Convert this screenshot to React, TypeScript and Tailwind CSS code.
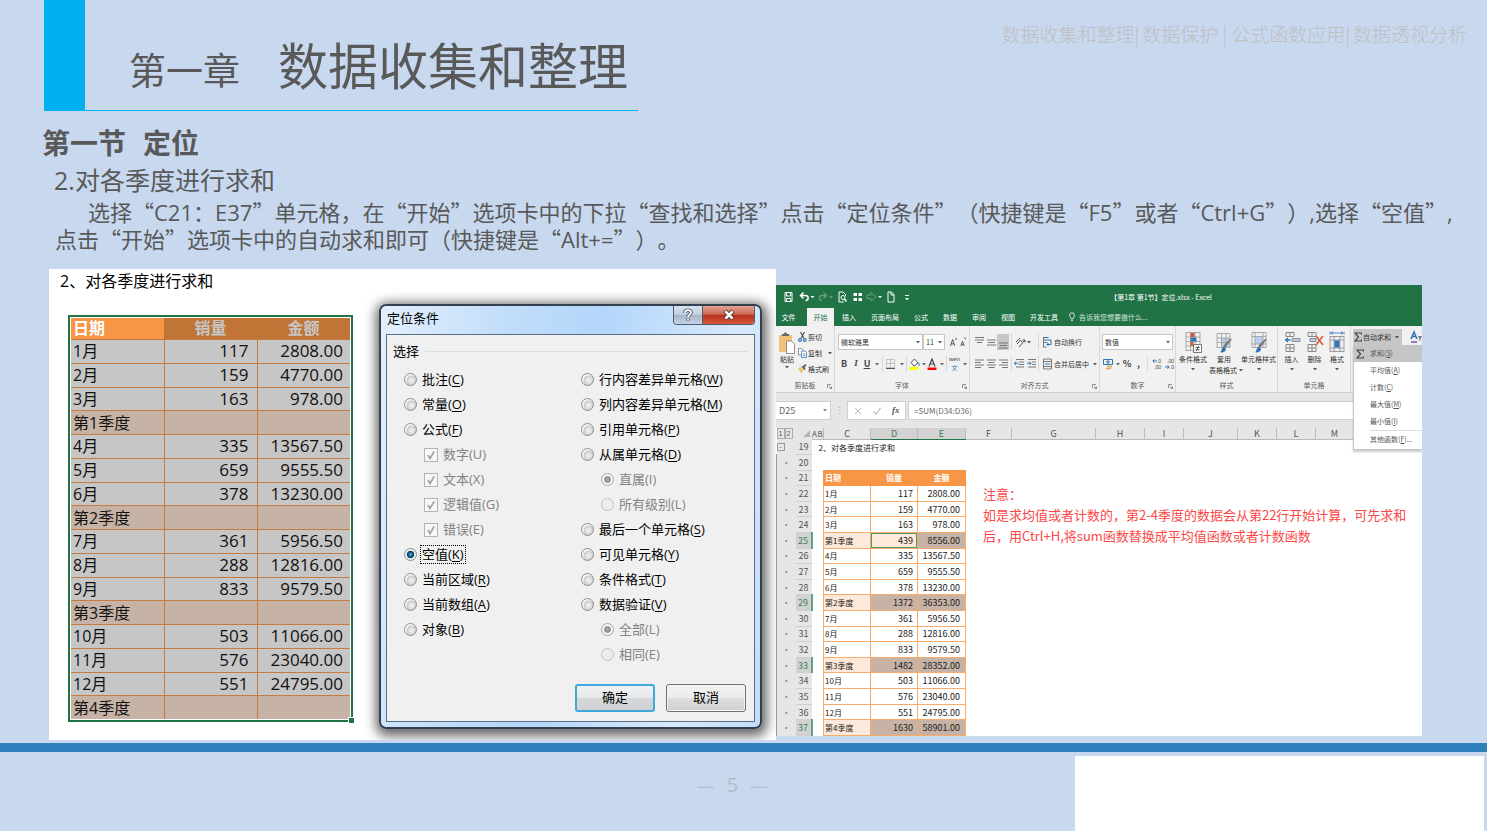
import React from "react";

/* ---------- data ---------- */

type Row = { label: string; qty?: string; amount?: string; total?: [string, string] };

const rows: Row[] = [
  { label: "1月", qty: "117", amount: "2808.00" },
  { label: "2月", qty: "159", amount: "4770.00" },
  { label: "3月", qty: "163", amount: "978.00" },
  { label: "第1季度", total: ["439", "8556.00"] },
  { label: "4月", qty: "335", amount: "13567.50" },
  { label: "5月", qty: "659", amount: "9555.50" },
  { label: "6月", qty: "378", amount: "13230.00" },
  { label: "第2季度", total: ["1372", "36353.00"] },
  { label: "7月", qty: "361", amount: "5956.50" },
  { label: "8月", qty: "288", amount: "12816.00" },
  { label: "9月", qty: "833", amount: "9579.50" },
  { label: "第3季度", total: ["1482", "28352.00"] },
  { label: "10月", qty: "503", amount: "11066.00" },
  { label: "11月", qty: "576", amount: "23040.00" },
  { label: "12月", qty: "551", amount: "24795.00" },
  { label: "第4季度", total: ["1630", "58901.00"] },
];

type Option = {
  text: string;
  keyChar: string;
  kind: "radio" | "check";
  group?: string;
  sub?: boolean;
  checked?: boolean;
};

const leftOptions: Option[] = [
  { text: "批注", keyChar: "C", kind: "radio" },
  { text: "常量", keyChar: "O", kind: "radio" },
  { text: "公式", keyChar: "F", kind: "radio" },
  { text: "数字", keyChar: "U", kind: "check", sub: true, checked: true },
  { text: "文本", keyChar: "X", kind: "check", sub: true, checked: true },
  { text: "逻辑值", keyChar: "G", kind: "check", sub: true, checked: true },
  { text: "错误", keyChar: "E", kind: "check", sub: true, checked: true },
  { text: "空值", keyChar: "K", kind: "radio", checked: true },
  { text: "当前区域", keyChar: "R", kind: "radio" },
  { text: "当前数组", keyChar: "A", kind: "radio" },
  { text: "对象", keyChar: "B", kind: "radio" },
];

const rightOptions: Option[] = [
  { text: "行内容差异单元格", keyChar: "W", kind: "radio" },
  { text: "列内容差异单元格", keyChar: "M", kind: "radio" },
  { text: "引用单元格", keyChar: "P", kind: "radio" },
  { text: "从属单元格", keyChar: "D", kind: "radio" },
  { text: "直属", keyChar: "I", kind: "radio", sub: true, group: "dependents", checked: true },
  { text: "所有级别", keyChar: "L", kind: "radio", sub: true, group: "dependents" },
  { text: "最后一个单元格", keyChar: "S", kind: "radio" },
  { text: "可见单元格", keyChar: "Y", kind: "radio" },
  { text: "条件格式", keyChar: "T", kind: "radio" },
  { text: "数据验证", keyChar: "V", kind: "radio" },
  { text: "全部", keyChar: "L", kind: "radio", sub: true, group: "validation", checked: true },
  { text: "相同", keyChar: "E", kind: "radio", sub: true, group: "validation" },
];

/* ---------- slide header ---------- */

function Header() {
  const topics = ["数据收集和整理", "数据保护", "公式函数应用", "数据透视分析"];
  return (
    <header className="flex items-start justify-between pl-11 pr-5">
      <div className="flex h-[111px] w-[594px] border-b border-[#00b0f0]">
        <div className="w-[41px] bg-[#00b0f0]" />
        <h1 className="flex items-baseline gap-[38px] whitespace-nowrap pl-11 pt-[31px] font-normal text-[#595959]">
          <span className="text-[37px] leading-[64px]">第一章</span>
          <span className="text-[50px] leading-[64px]">数据收集和整理</span>
        </h1>
      </div>
      <nav className="flex whitespace-nowrap pt-5 text-[19px] font-light leading-7 text-[#bfbfbf]">
        {topics.map((t, i) => (
          <React.Fragment key={t}>
            {i > 0 && <span className={i === 2 ? "px-1" : "pr-[3px]"}>|</span>}
            <a href="#">{t}</a>
          </React.Fragment>
        ))}
      </nav>
    </header>
  );
}

function En({ children }: { children: React.ReactNode }) {
  return <span className="font-['Open_Sans'] leading-none">{children}</span>;
}

function Intro() {
  return (
    <section className="pl-[42px] text-[#595959]">
      <h2 className="mt-[15px] flex gap-[17px] text-[28px] font-bold leading-8">
        <span>第一节</span>
        <span>定位</span>
      </h2>
      <h3 className="mt-1.5 h-8 pl-3 text-[25px] font-normal leading-[31px]">
        <En>2.</En>对各季度进行求和
      </h3>
      <p className="mt-0.5 whitespace-nowrap pl-[13px] text-[22px] leading-[27px] [text-spacing-trim:space-all]">
        <span className="pl-[33px]">
          选择“<En>C21</En>：<En>E37</En>”单元格，在“开始”选项卡中的下拉“查找和选择”点击“定位条件”（快捷键是“<En>F5</En>”或者“<En>Ctrl+G</En>”）<En>,</En>选择“空值”<En>,</En>
        </span>
        <br />
        点击“开始”选项卡中的自动求和即可（快捷键是“<En>Alt+=</En>”）。
      </p>
    </section>
  );
}

/* ---------- left picture ---------- */

function SelectedTable() {
  return (
    <div className="relative mt-[22px] border-2 border-[#217346] bg-white p-px">
      <table className="h-[401px] w-full table-fixed border-collapse leading-5 text-[#111]">
        <thead>
          <tr className="text-[16px] leading-[21px]">
            <th className="w-1/3 bg-[#f79646] py-0 pl-0.5 text-left font-bold text-white">日期</th>
            <th className="w-1/3 bg-[#c07436] p-0 font-bold text-[#c6c6c6]">销量</th>
            <th className="w-1/3 bg-[#c07436] p-0 font-bold text-[#c6c6c6]">金额</th>
          </tr>
        </thead>
        <tbody>
          {rows.map((r) => (
            <tr key={r.label} className={r.total ? "bg-[#c6b3a5]" : "bg-[#c6c6c6]"}>
              <td className="border-r border-t border-[#c57c42] py-0 pl-0.5 text-[16px]">{r.label}</td>
              <td className="border-r border-t border-[#c57c42] py-0 pr-2 text-right text-[17px]">{r.qty}</td>
              <td className="border-t border-[#c57c42] py-0 pr-[7px] text-right text-[17px]">{r.amount}</td>
            </tr>
          ))}
        </tbody>
      </table>
      <span className="absolute -bottom-[3px] -right-[3px] size-[6px] border-l border-t border-white bg-[#217346]" />
    </div>
  );
}

function OptionRow({ o }: { o: Option }) {
  const id = `${o.group ?? "goto"}-${o.text}`;
  const focused = o.text === "空值";
  return (
    <div className={`flex h-[25px] items-center ${o.sub ? "pl-5" : ""}`}>
      {o.kind === "radio" ? (
        <input
          id={id}
          type="radio"
          name={o.group ?? "goto"}
          defaultChecked={o.checked}
          disabled={o.sub}
          className="size-[13px] shrink-0 appearance-none rounded-full border border-[#8e8f8f] bg-[radial-gradient(circle_at_60%_60%,#f4f4f4_0,#d4d7da_40%,#c4c8cc_50%,#f4f4f4_58%)] checked:bg-[radial-gradient(circle,#6ec3ea_0,#1a6d9c_20%,#0c3651_42%,#e8eef2_52%)] disabled:border-[#bcbcbc] disabled:bg-[radial-gradient(circle,#ececec_60%,#f8f8f8_70%)] disabled:checked:border-[#a6a6a6] disabled:checked:bg-[radial-gradient(circle,#b0b0b0_0,#8a8a8a_36%,#f4f4f4_50%)]"
        />
      ) : (
        <span className="relative size-[14px] shrink-0">
          <input
            id={id}
            type="checkbox"
            defaultChecked={o.checked}
            disabled
            className="block size-[14px] appearance-none border border-[#b4b4b4] bg-[#f7f7f7]"
          />
          <svg viewBox="0 0 14 14" className="pointer-events-none absolute inset-0 size-[14px]" fill="none" stroke="#a3a3a3" strokeWidth="1.8">
            <path d="M4 7l2 3.4L10.2 3.4" />
          </svg>
        </span>
      )}
      <label
        htmlFor={id}
        className={`whitespace-nowrap text-[13px] leading-[17px] ${
          focused ? "ml-[3px] border border-dotted border-black px-px text-black" : o.sub ? "ml-[5px] text-[#838383]" : "ml-[5px] text-black"
        }`}
      >
        {o.text}({o.sub ? o.keyChar : <u className="underline-offset-2">{o.keyChar}</u>})
      </label>
    </div>
  );
}

function GoToDialog() {
  return (
    <div
      role="dialog"
      aria-label="定位条件"
      className="relative ml-[26px] mr-[14px] mt-[35px] flex h-[425px] flex-1 flex-col rounded-[7px] border-2 border-[#33404f] bg-[linear-gradient(100deg,#e3effc_0,#c0dcfa_30%,#b4d6fb_50%,#d8e9fc_80%,#c3dcf8_100%)] px-[5px] pb-[5px] shadow-[1px_3px_12px_4px_rgba(0,0,0,0.6)]"
    >
      <div className="flex h-7 items-start justify-between">
        <h4 className="pl-px pt-0.5 text-[13px] leading-5 text-black">定位条件</h4>
        <div className="flex h-[19px] overflow-hidden rounded-b-[4px] border border-t-0 border-[#515c6b]">
          <button aria-label="帮助" className="flex w-[29px] items-center justify-center border-r border-[#515c6b] bg-[linear-gradient(#d8e2ee_0,#c2cfde_48%,#a5b5c8_50%,#c5d3e2_100%)]">
            <svg viewBox="0 0 12 14" className="h-[14px] w-3">
              <path d="M3 4.8C3 1.4 9 1.4 9 4.6c0 2-3 2.2-3 4.4M6 10.6v1.8" fill="none" stroke="#4a5260" strokeWidth="3.6" />
              <path d="M3 4.8C3 1.4 9 1.4 9 4.6c0 2-3 2.2-3 4.4M6 10.8v1.5" fill="none" stroke="#fff" strokeWidth="1.8" />
            </svg>
          </button>
          <button aria-label="关闭" className="flex w-[51px] items-center justify-center bg-[linear-gradient(#e2a493_0,#cd6a56_46%,#b9301b_50%,#d4593a_100%)]">
            <svg viewBox="0 0 14 12" className="h-3 w-[14px]">
              <path d="M3 2l8 8M11 2l-8 8" stroke="#5a3733" strokeWidth="4.4" />
              <path d="M3.4 2.4l7.2 7.2M10.6 2.4L3.4 9.6" stroke="#fff" strokeWidth="2.6" />
            </svg>
          </button>
        </div>
      </div>
      <div className="flex flex-1 flex-col border border-[#5b6f86] bg-[#f0f0f0] px-[6px]">
        <div className="flex items-center gap-[6px] pt-1.5 text-[13px] leading-5 text-black">
          选择
          <span className="h-px flex-1 bg-[#d5dfe5]" />
        </div>
        <div className="mt-1.5 flex pl-[11px]">
          <div className="w-[177px]">
            {leftOptions.map((o) => (
              <OptionRow key={o.text} o={o} />
            ))}
          </div>
          <div className="flex-1">
            {rightOptions.map((o) => (
              <OptionRow key={o.text} o={o} />
            ))}
          </div>
        </div>
        <div className="mb-[9px] mt-auto flex justify-end gap-[11px] pr-0.5 text-[13px] text-black">
          <button className="h-7 w-20 rounded-[3px] border-2 border-[#3fa9d9] bg-[linear-gradient(#f0f2f3_0,#e6e8e9_48%,#d6d8d9_52%,#cfd1d2_100%)]">确定</button>
          <button className="h-7 w-20 rounded-[3px] border border-[#707070] bg-[linear-gradient(#f2f2f2_0,#ebebeb_48%,#dddddd_52%,#cfcfcf_100%)] shadow-[inset_0_0_0_1px_#f5f5f5]">取消</button>
        </div>
      </div>
    </div>
  );
}

function LeftPicture() {
  return (
    <figure className="flex h-[471px] overflow-hidden bg-white font-['Open_Sans','Noto_Sans_CJK_SC',sans-serif]">
      <div className="w-[304px] shrink-0 pl-[19px]">
        <p className="-ml-2 text-[16px] leading-6 text-black">2、对各季度进行求和</p>
        <SelectedTable />
      </div>
      <GoToDialog />
    </figure>
  );
}

/* ---------- Excel window ---------- */

function Caret({ className = "" }: { className?: string }) {
  return (
    <span className={`flex shrink-0 justify-center ${className}`}>
      <svg viewBox="0 0 4 3" className="h-[3px] w-1">
        <path d="M0 0h4L2 2.6z" fill="currentColor" opacity=".8" />
      </svg>
    </span>
  );
}

function Sep() {
  return <span className="h-4 w-px shrink-0 bg-[#d8d8d8]" />;
}

function QuickAccess() {
  return (
    <div className="grid h-[23px] grid-cols-[1fr_auto_1fr] items-center text-white">
      <div className="flex items-center pl-2">
        <svg viewBox="0 0 132 12" className="h-3 w-[132px]" fill="none" stroke="currentColor">
          <path d="M1 1.500h7v9H1zM2.600 1.500v3.500h4V1.500M2.600 10.500V7.500h4v3" />
          <path d="M17 4.500h4.500c3.500 0 3.500 5 0 5M19.500 1.500l-3 3 3 3" strokeWidth="1.5" />
          <path d="M26.500 5h4l-2 2.200zM94 5h4l-2 2.200z" fill="currentColor" stroke="none" />
          <g opacity=".3">
            <path d="M42 4.500h-4c-3.500 0-3.500 5 0 5M39.500 1.500l3 3-3 3" strokeWidth="1.300" />
            <path d="M45 5h4l-2 2.200z" fill="currentColor" stroke="none" />
            <path d="M83 4h4V1.500L92 6l-5 4V7.500h-4z" />
          </g>
          <path d="M60 11h-5V1h4l2.500 2.500V5" />
          <circle cx="59" cy="6.500" r="2" />
          <path d="M60.500 8l2 2.500" strokeWidth="1.400" />
          <path d="M69.500 2h3.500v3h-3.500zM74.500 2H78v3h-3.500zM69.500 7H73v3h-3.500zM74.500 7H78v3h-3.500z" fill="currentColor" stroke="none" />
          <path d="M104 1h3.500L110 3.500V11h-6zM107 1v3h3" />
          <path d="M121 4.500h4" />
          <path d="M121 7h4l-2 2.200z" fill="currentColor" stroke="none" />
        </svg>
      </div>
      <span className="pl-[124px] text-[7px] leading-[10px]">【第1章 第1节】定位.xlsx - Excel</span>
      <span />
    </div>
  );
}

function Tabs() {
  const tabs = ["插入", "页面布局", "公式", "数据", "审阅", "视图", "开发工具"];
  return (
    <div className="flex h-[18px] items-stretch whitespace-nowrap text-[7px] leading-[17px] text-white">
      <button className="w-[31px] pr-1.5 text-center">文件</button>
      <button className="w-[27px] bg-[#f1f1f1] text-center text-[#217346]">开始</button>
      <div className="flex gap-[15px] pl-2">
        {tabs.map((t) => (
          <button key={t}>{t}</button>
        ))}
      </div>
      <label className="flex items-center gap-1 pl-[11px] text-[#d5e6dc]">
        <svg viewBox="0 0 6 10" className="h-[10px] w-1.5" fill="none" stroke="#fff" strokeWidth=".8">
          <path d="M2 7C2 5.500.6 5 .6 3.200a2.400 2.400 0 014.800 0C5.400 5 4 5.500 4 7zM2 8.700h2" />
        </svg>
        <input className="w-[72px] bg-transparent placeholder:text-[#d5e6dc]" placeholder="告诉我您想要做什么..." />
      </label>
    </div>
  );
}

function Group({ title, launcher, children }: { title?: string; launcher?: boolean; children: React.ReactNode }) {
  return (
    <div className="relative flex h-[66px] min-w-0 flex-col border-r border-[#d9d9d9]">
      <div className="h-[54px]">{children}</div>
      <div className="text-center text-[7px] leading-[10px] text-[#5c5c5c]">{title}</div>
      {launcher && (
        <svg viewBox="0 0 5 5" className="absolute bottom-[3px] right-0.5 size-[5px]" fill="none" stroke="#777" strokeWidth=".8">
          <path d="M.5 4V.5H4M2 2l2.500 2.500M4.500 2.500v2h-2" />
        </svg>
      )}
    </div>
  );
}

function Clipboard() {
  return (
    <Group title="剪贴板" launcher>
      <div className="flex">
        <button className="flex w-[22px] flex-col items-center pt-1.5 leading-[10px]">
          <svg viewBox="0 0 16 22" className="h-[22px] w-4">
            <path d="M0 3h13v17H0z" fill="#eec27a" />
            <path d="M3 4V2h2c0-2 3-2 3 0h2v2z" fill="#666" />
            <path d="M7.500 9h5l3 3v9.500h-8z" fill="#fff" stroke="#777" strokeWidth=".8" />
          </svg>
          粘贴
          <Caret className="mt-0.5" />
        </button>
        <div className="pt-[3px]">
          <button className="flex h-4 items-center gap-px">
            <svg viewBox="0 0 9 10" className="h-[10px] w-[9px]" fill="none" strokeWidth="1.200">
              <path d="M2.500 0l3.500 6.500M6.500 0L3 6.500" stroke="#555" />
              <circle cx="2" cy="8" r="1.400" stroke="#3b78bc" />
              <circle cx="6.800" cy="8" r="1.400" stroke="#3b78bc" />
            </svg>
            剪切
          </button>
          <button className="flex h-4 items-center gap-px">
            <svg viewBox="0 0 9 10" className="h-[10px] w-[9px]" fill="#fff" strokeWidth=".8">
              <path d="M.5.500h3.500l1 1V7H.5z" stroke="#777" />
              <path d="M3.500 3H7l1.500 1.500V9.500h-5zM4.800 6h2.500M4.800 7.800h2.500" stroke="#3b78bc" />
            </svg>
            复制
            <Caret className="ml-[5px]" />
          </button>
          <button className="flex h-4 items-center gap-px">
            <svg viewBox="0 0 9 10" className="h-[10px] w-[9px]">
              <path d="M0 4l3.500-1L6 6 3 9.500z" fill="#eec27a" />
              <path d="M3.500 2.500l3 3.500 1-1-1-1.500L8.500 1 7.500 0 5.200 2z" fill="#555" />
            </svg>
            格式刷
          </button>
        </div>
      </div>
    </Group>
  );
}

function SmallSelect({ value, className }: { value: string; className: string }) {
  return (
    <span className={`relative flex h-4 shrink-0 items-center ${className}`}>
      <select aria-label={value} className="h-4 w-full appearance-none border border-[#c6c6c6] bg-white pl-0.5 leading-[14px]">
        <option>{value}</option>
      </select>
      <Caret className="pointer-events-none absolute right-[3px] top-[7px]" />
    </span>
  );
}

function FontGroup() {
  return (
    <Group title="字体" launcher>
      <div className="flex h-6 items-end pl-[3px]">
        <SmallSelect value="微软雅黑" className="w-[85px]" />
        <SmallSelect value="11" className="w-[22px]" />
        <svg viewBox="0 0 22 14" className="ml-[5px] h-[14px] w-[22px] self-end" fill="none" stroke="#444">
          <path d="M.5 10.500L3 3l2.500 7.500M1.300 8h3.400M12.500 10.500L14.500 5l2 5.500M13.200 9h2.600" />
          <path d="M5.500 3L7 1l1.500 2zM16 1h3l-1.500 2z" fill="#2e75b6" stroke="none" />
        </svg>
      </div>
      <div className="mt-1.5 flex h-4 items-center pl-[3px] text-[9px] text-[#444]">
        <button className="w-3 font-bold">B</button>
        <button className="w-3 font-['Liberation_Serif'] font-bold italic">I</button>
        <button className="w-[10px] font-bold underline">U</button>
        <Caret className="w-[10px]" />
        <Sep />
        <svg viewBox="0 0 14 12" className="h-3 w-[14px]" fill="none" stroke="#999" strokeDasharray="1 1">
          <path d="M3.500 1.500h8v8h-8zM7.500 1.500v8M3.500 5.500h8" />
          <path d="M3 10.500h9" stroke="#555" strokeDasharray="none" />
        </svg>
        <Caret className="w-[9px]" />
        <Sep />
        <svg viewBox="0 0 14 12" className="h-3 w-[14px]">
          <path d="M4 4.500L7.500 1 11 5 7 8.200z" fill="#fff" stroke="#555" />
          <path d="M11 4.500c1.500 1 1.500 2.500.8 3.500" stroke="#2e75b6" fill="none" />
          <path d="M2.500 9h9v3h-9z" fill="#ff0" />
        </svg>
        <Caret className="w-1.5" />
        <svg viewBox="0 0 10 12" className="h-3 w-[10px]">
          <path d="M2 8.500L5 1l3 7.500M3 6h4" fill="none" stroke="#444" strokeWidth="1.200" />
          <path d="M.5 9.500h9V12h-9z" fill="#f00" />
        </svg>
        <Caret className="w-[9px]" />
        <Sep />
        <span className="flex w-[15px] flex-col text-center text-[6px]">
          <span className="font-['Liberation_Sans'] leading-[7px]">wén</span>
          <span className="leading-[9px] text-[#2e75b6]">文</span>
        </span>
        <Caret className="w-1.5" />
      </div>
    </Group>
  );
}

const lineIcons: Record<string, string> = {
  top: "M1 1.500h9M1 4h9M3 6.500h5",
  middle: "M1 4h9M2 6.500h7M1 9h9",
  bottom: "M1 7h9M2 9.500h7M1 12h9",
  left: "M1 2h9M1 4.500h6M1 7h9M1 9.500h6",
  center: "M1 2h9M2.500 4.500h6M1 7h9M2.500 9.500h6",
  right: "M1 2h9M4 4.500h6M1 7h9M4 9.500h6",
};

function LineIcon({ name, active }: { name: string; active?: boolean }) {
  return (
    <button aria-label={name} className={`flex h-4 w-3 items-center justify-center ${active ? "bg-[#c6c6c6]" : ""}`}>
      <svg viewBox="0 0 11 13" className="h-[13px] w-[11px]" stroke="#777" fill="none">
        <path d={lineIcons[name]} />
      </svg>
    </button>
  );
}

function AlignGroup() {
  return (
    <Group title="对齐方式" launcher>
      <div className="flex h-6 items-end pl-[3px]">
        <LineIcon name="top" />
        <LineIcon name="middle" />
        <LineIcon name="bottom" active />
        <span className="ml-0.5 flex h-4 items-center">
          <Sep />
          <svg viewBox="0 0 12 12" className="ml-0.5 h-3 w-3" fill="none" stroke="#555">
            <path d="M2 6l4-4M3 8l3.500-4L8 6M5 11l6-7M8.500 4H11v2.500" />
          </svg>
          <Caret className="w-1.5" />
          <span className="ml-1.5" />
          <Sep />
          <button className="flex items-center gap-0.5 whitespace-nowrap pl-1">
            <svg viewBox="0 0 9 12" className="h-3 w-[9px]" fill="none" stroke="#2e75b6">
              <path d="M.5 1.500h5M.5 4h7.500v4.500H4M5.500 7L4 8.500 5.500 10" />
              <path d="M.5 1v10.500M.5 11h3M.5 6.500h4" stroke="#777" />
            </svg>
            自动换行
          </button>
        </span>
      </div>
      <div className="mt-1.5 flex h-4 items-center pl-[3px]">
        <LineIcon name="left" />
        <LineIcon name="center" />
        <LineIcon name="right" />
        <span className="ml-0.5 flex h-4 items-center">
          <Sep />
          <svg viewBox="0 0 26 12" className="h-3 w-[26px]" fill="none" stroke="#777">
            <path d="M4 1.500h8M7 4h5M7 6.500h5M4 9h8M16 1.500h8M20 4h4M20 6.500h4M16 9h8" />
            <path d="M6.500 5.200h-4M4 3.500L2.500 5.200 4 7M15 5.200h4M17.500 3.500L19 5.200 17.500 7" stroke="#2e75b6" />
          </svg>
          <Sep />
          <button className="flex items-center gap-0.5 whitespace-nowrap pl-1">
            <svg viewBox="0 0 9 12" className="h-3 w-[9px]" fill="none" stroke="#777">
              <path d="M.5 1h8v10h-8zM.5 3.500h8M.5 8.500h8" />
              <path d="M2 6h5" stroke="#2e75b6" />
            </svg>
            合并后居中
            <Caret className="ml-0.5" />
          </button>
        </span>
      </div>
    </Group>
  );
}

function NumberGroup() {
  return (
    <Group title="数字" launcher>
      <div className="flex h-6 items-end px-0.5">
        <SmallSelect value="数值" className="w-full" />
      </div>
      <div className="mt-1.5 flex h-4 items-center pl-[3px] text-[9px] text-[#444]">
        <svg viewBox="0 0 11 12" className="h-3 w-[11px]" fill="none">
          <path d="M.5 1.500h9v5h-9z" stroke="#2e75b6" />
          <circle cx="5" cy="4" r="1.300" stroke="#2e75b6" />
          <path d="M4 8.500h5M3 10.500h5" stroke="#e8a84c" strokeWidth="1.600" />
        </svg>
        <Caret className="w-[7px]" />
        <button className="w-3 font-bold">%</button>
        <button className="w-[11px] font-bold">,</button>
        <span className="ml-[3px]" />
        <Sep />
        <button className="ml-[3px] flex w-[10px] flex-col items-end font-['Liberation_Sans'] text-[5px] leading-[6px]">
          <span className="flex items-center">
            <svg viewBox="0 0 5 4" className="h-1 w-[5px]" fill="none" stroke="#2e75b6"><path d="M5 2H1M2.500.3L.8 2l1.700 1.700" /></svg>
            .0
          </span>
          <span>.00</span>
        </button>
        <button className="ml-[3px] flex w-[10px] flex-col items-end font-['Liberation_Sans'] text-[5px] leading-[6px]">
          <span>.00</span>
          <span className="flex items-center">
            <svg viewBox="0 0 5 4" className="h-1 w-[5px]" fill="none" stroke="#2e75b6"><path d="M0 2h4M2.500.3L4.200 2 2.500 3.700" /></svg>
            .0
          </span>
        </button>
      </div>
    </Group>
  );
}

function BigButton({ label, second, width, children }: { label: string; second?: string; width: string; children: React.ReactNode }) {
  return (
    <button className={`flex flex-col items-center whitespace-nowrap pt-[5px] leading-[11px] ${width}`}>
      <svg viewBox="0 0 18 23" className="h-[23px] w-[18px]" fill="none">
        {children}
      </svg>
      {label}
      {second ? (
        <span className="flex items-center gap-0.5 pl-1">
          {second}
          <Caret />
        </span>
      ) : (
        <Caret className="mt-[3px]" />
      )}
    </button>
  );
}

const brush = (
  <>
    <path d="M17 8l-7 9-2-2 7-7z" fill="#777" />
    <path d="M5 21c2 0 1-5 4-5l2 2c0 3-4 4-6 3z" fill="#2e75b6" />
  </>
);

function StylesGroup() {
  return (
    <Group title="样式">
      <div className="flex pl-0.5">
        <BigButton label="条件格式" width="w-[30px]">
          <path d="M2 1.500h14v18H2zM2 6h14M2 10.500h14M2 15h14M6.500 1.500v18M11 1.500v18" stroke="#999" strokeWidth=".8" />
          <path d="M6.500 2h4v4h-4zM6.500 11h3v4h-3z" fill="#d9593a" />
          <path d="M6.500 6.500h6v4h-6z" fill="#2e75b6" />
          <path d="M9.500 13.500h8v8h-8z" fill="#fff" stroke="#777" />
          <path d="M11.500 16.500h4M11.500 18.800h4M14.800 15l-2.500 5" stroke="#333" strokeWidth=".8" />
        </BigButton>
        <BigButton label="套用" second="表格格式" width="w-[32px]">
          <path d="M6 7h9v9H6z" fill="#b8d0ea" />
          <path d="M2 2.500h13v14H2zM2 7h13M2 11.500h13M6.500 2.500v14M11 2.500v14" stroke="#999" strokeWidth=".8" />
          {brush}
        </BigButton>
        <BigButton label="单元格样式" width="w-[37px]">
          <path d="M5 6h8v7H5z" fill="#b8d0ea" />
          <path d="M2 1.500h14v15H2zM2 5.500h14M2 13h14M5 1.500v15M13 1.500v15" stroke="#999" strokeWidth=".8" />
          {brush}
        </BigButton>
      </div>
    </Group>
  );
}

function CellsGroup() {
  return (
    <Group title="单元格">
      <div className="flex pl-0.5">
        <BigButton label="插入" width="w-[23px]">
          <path d="M3 1.500h8v4H3zM7 1.500v4M3 13.500h8v7H3zM7 13.500v7M3 17h8" stroke="#888" />
          <path d="M9 7.500h8v3H9z" fill="#b8d0ea" stroke="#777" strokeWidth=".8" />
          <path d="M7.500 9H3M5 7L2.500 9 5 11" stroke="#2e75b6" strokeWidth="1.300" />
        </BigButton>
        <BigButton label="删除" width="w-[23px]">
          <path d="M2 1.500h8v4H2zM6 1.500v4M2 13.500h8v7H2zM6 13.500v7M2 17h8" stroke="#888" />
          <path d="M4 7.500h6v3H4z" fill="#b8d0ea" stroke="#777" strokeWidth=".8" />
          <path d="M10 5l7 9M17 5l-7 9" stroke="#d9593a" strokeWidth="1.600" />
        </BigButton>
        <BigButton label="格式" width="w-[22px]">
          <path d="M2 5.500h14v15H2zM2 9h14M2 17h14M6 5.500v15M12 5.500v15" stroke="#888" strokeWidth=".8" />
          <path d="M6.500 9.500h5v7h-5z" fill="#2e75b6" />
          <path d="M3 2h12M2 .5v3M16 .5v3M5 .6L3 2l2 1.400M13 .6L15 2l-2 1.400" stroke="#2e75b6" strokeWidth=".8" />
        </BigButton>
      </div>
    </Group>
  );
}

function Sigma() {
  return (
    <svg viewBox="0 0 8 10" className="h-[10px] w-2 shrink-0" fill="none" stroke="#444" strokeWidth="1.200">
      <path d="M7.400 2.500V1H1l3.500 4L1 9h6.400V7.500" />
    </svg>
  );
}

function SumMenu() {
  const items: [string, string, string][] = [
    ["求和", "S", ""],
    ["平均值", "A", ""],
    ["计数", "C", ""],
    ["最大值", "M", ""],
    ["最小值", "I", ""],
    ["其他函数", "F", "..."],
  ];
  return (
    <ul className="absolute left-0.5 right-0 top-[19px] z-10 border-b border-l border-[#c6c6c6] bg-white pb-0.5 text-[7px] text-[#555] shadow-[0_2px_2px_rgba(0,0,0,0.2)]">
      {items.map(([t, k, tail], i) => (
        <li
          key={t}
          className={`flex h-[17px] items-center whitespace-nowrap ${i === 0 ? "bg-[#c5c5c5]" : ""} ${i === 5 ? "ml-4 border-t border-[#dcdcdc]" : "pl-0.5"}`}
        >
          {i < 5 && <span className="w-[14px] shrink-0">{i === 0 && <Sigma />}</span>}
          <button>
            {t}(<u>{k}</u>){tail}
          </button>
        </li>
      ))}
    </ul>
  );
}

function EditingGroup() {
  return (
    <div className="relative flex items-start pl-0.5 pt-[3px]">
      <button className="flex h-4 w-[49px] items-center gap-px whitespace-nowrap bg-[#c6c6c6] pl-px">
        <Sigma />
        自动求和
        <Caret className="ml-[3px]" />
      </button>
      <svg viewBox="0 0 12 14" className="ml-2 h-[14px] w-3" fill="none">
        <path d="M1 10l3-7 3 7M2 7.500h4" stroke="#2e75b6" strokeWidth="1.500" />
        <path d="M1 13h6" stroke="#8650a8" strokeWidth="1.500" />
        <path d="M8 7h4l-1.500 3v2H9.500v-2z" fill="#777" />
      </svg>
      <SumMenu />
    </div>
  );
}

function FormulaBar() {
  return (
    <div className="flex h-9 items-center border-t border-[#d0d0d0] bg-[#e6e6e6] text-[9px] text-[#666]">
      <div className="relative w-[55px]">
        <input aria-label="名称框" defaultValue="D25" className="h-[19px] w-full border border-l-0 border-[#cfcfcf] bg-white pl-[3px]" />
        <Caret className="absolute right-1 top-2" />
      </div>
      <span className="w-4 text-center text-[#aaa]">⋮</span>
      <div className="flex h-[19px] w-[59px] items-center justify-around border border-[#cfcfcf] bg-white">
        <svg viewBox="0 0 8 8" className="size-2" stroke="#bbb" fill="none"><path d="M1 1l6 6M7 1L1 7" /></svg>
        <svg viewBox="0 0 8 8" className="size-2" stroke="#bbb" fill="none" strokeWidth="1.200"><path d="M.5 4.500L3 7l4.500-6" /></svg>
        <i className="font-['Liberation_Serif'] text-[9px] font-bold text-[#555]">fx</i>
      </div>
      <input aria-label="编辑栏" defaultValue="=SUM(D34:D36)" className="ml-0.5 h-[19px] min-w-0 flex-1 border border-r-0 border-[#cfcfcf] bg-white pl-[5px] text-[8px]" />
    </div>
  );
}

const columns: [string, string][] = [
  ["A", "w-[6px]"],
  ["B", "w-[6px]"],
  ["C", "w-[47px]"],
  ["D", "w-[47px]"],
  ["E", "w-[48px]"],
  ["F", "w-[46px]"],
  ["G", "w-[84px]"],
  ["H", "w-[49px]"],
  ["I", "w-[39px]"],
  ["J", "w-[54px]"],
  ["K", "w-[39px]"],
  ["L", "w-[39px]"],
  ["M", "w-[38px]"],
  ["", ""],
];

function DataCells({ n }: { n: number }) {
  if (n === 19)
    return (
      <td colSpan={13} className="p-0 pl-px text-left text-[8px]">
        2、对各季度进行求和
      </td>
    );
  if (n === 20) return <td colSpan={13} />;
  if (n === 21)
    return (
      <>
        <td className="p-0" />
        <th className="border border-[#f79646] bg-[#f79646] p-0 pl-px text-left text-[8px] font-bold text-white">日期</th>
        <th className="border border-[#f79646] bg-[#f79646] p-0 text-[8px] font-bold text-white">销量</th>
        <th className="border border-[#f79646] bg-[#f79646] p-0 text-[8px] font-bold text-white">金额</th>
        <td colSpan={9} />
      </>
    );
  const r = rows[n - 22];
  const total = !!r.total;
  const active = n === 25;
  return (
    <>
      <td className="p-0" />
      <td className={`border border-[#f9ab6b] p-0 pl-px text-[8px] ${total ? "bg-[#fde9d9]" : ""}`}>{r.label}</td>
      <td
        className={`border border-[#f9ab6b] p-0 pr-1 text-right ${
          active ? "bg-[#fde9d9] shadow-[inset_0_0_0_1px_#4f9a6d]" : total ? "bg-[#c6b3a5]" : ""
        }`}
      >
        {total ? r.total![0] : r.qty}
      </td>
      <td className={`border border-[#f9ab6b] p-0 pr-[5px] text-right ${total ? "bg-[#c6b3a5]" : ""}`}>{total ? r.total![1] : r.amount}</td>
      <td colSpan={9} />
    </>
  );
}

function Sheet() {
  const numbers = Array.from({ length: 19 }, (_, i) => 19 + i);
  return (
    <div className="relative bg-white">
      <table className="h-[308px] w-full table-fixed border-collapse text-[9px] leading-[11px] text-[#222]">
        <thead>
          <tr className="bg-[#e6e6e6] text-[#555]">
            <th className="w-[19px] p-0 font-['Liberation_Sans'] text-[7px] font-normal leading-[9px]">
              <div className="flex">
                <button className="w-2 border border-[#aaa]">1</button>
                <button className="w-2 border border-[#aaa]">2</button>
              </div>
            </th>
            <th className="w-4 p-0">
              <svg viewBox="0 0 8 8" className="ml-auto mr-0.5 size-[7px]"><path d="M8 0v8H0z" fill="#b5b5b5" /></svg>
            </th>
            {columns.map(([c, w]) => (
              <th
                key={c}
                className={`${w} border-b p-0 font-normal ${
                  c === "D" || c === "E" ? "border-r border-b-[#217346] border-r-[#bbb] bg-[#d2d2d2] text-[#3f7f5c]" : c === "A" ? "border-b-[#bbb] text-[8px]" : "border-r border-[#bbb]"
                } ${c === "B" ? "text-[8px]" : ""}`}
              >
                {c}
              </th>
            ))}
          </tr>
        </thead>
        <tbody>
          {numbers.map((n) => {
            const sel = n >= 25 && (n - 25) % 4 === 0;
            return (
              <tr key={n}>
                <td className={`bg-[#e6e6e6] p-0 text-center text-[#888] ${n > 19 ? "border-l border-[#999]" : ""}`}>
                  {n === 19 ? <button aria-label="折叠" className="block size-2 border border-[#999] leading-[5px]">-</button> : "·"}
                </td>
                <th
                  className={`border-b border-[#cfcfcf] p-0 text-center font-normal ${
                    sel ? "border-r-2 border-r-[#5fa37d] bg-[#d2d2d2] text-[#3f7f5c]" : "bg-[#e6e6e6] text-[#555]"
                  }`}
                >
                  {n}
                </th>
                <td className="p-0" />
                <DataCells n={n} />
              </tr>
            );
          })}
        </tbody>
      </table>
      <p className="absolute left-[207px] right-0 top-[55px] whitespace-nowrap text-[13px] leading-[21px] text-[#fb4747]">
        注意：
        <br />
        如是求均值或者计数的，第2-4季度的数据会从第22行开始计算，可先求和
        <br />
        后，用Ctrl+H,将sum函数替换成平均值函数或者计数函数
      </p>
    </div>
  );
}

function ExcelPicture() {
  return (
    <figure className="mt-4 h-[451px] overflow-hidden bg-white">
      <div className="bg-[#217346]">
        <QuickAccess />
        <Tabs />
      </div>
      <div className="grid grid-cols-[59fr_135fr_130fr_76fr_102fr_73fr_71fr] bg-[#f1f1f1] text-[7px] text-[#333]">
        <Clipboard />
        <FontGroup />
        <AlignGroup />
        <NumberGroup />
        <StylesGroup />
        <CellsGroup />
        <EditingGroup />
      </div>
      <FormulaBar />
      <Sheet />
    </figure>
  );
}

/* ---------- page ---------- */

export default function App() {
  return (
    <main lang="zh-CN" className="flex min-h-screen flex-col overflow-x-hidden bg-[#c7d8ef] font-['Noto_Sans_CJK_SC','Open_Sans',sans-serif]">
      <Header />
      <Intro />
      <div className="ml-[49px] mr-[65px] mt-[17px] grid grid-cols-[727fr_646fr] items-start">
        <LeftPicture />
        <ExcelPicture />
      </div>
      <div className="mt-[3px] h-[9px] shrink-0 bg-[#2f80bd]" />
      <footer className="grid flex-1 grid-cols-[1fr_409px] pr-[3px] pt-1">
        <p className="flex justify-end gap-3 pr-[307px] pt-[15px] text-[20px] leading-7 text-[#b4bccb]">
          <span>—</span>
          <span className="font-['Open_Sans']">5</span>
          <span>—</span>
        </p>
        <div className="bg-white" />
      </footer>
    </main>
  );
}
